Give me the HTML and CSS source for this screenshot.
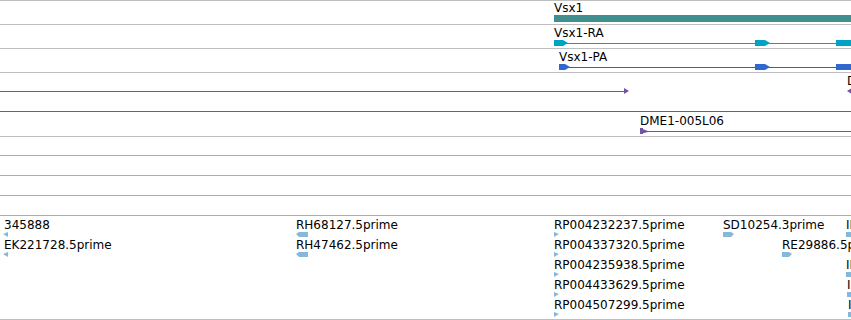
FILE: index.html
```html
<!DOCTYPE html>
<html>
<head>
    <title>Track view</title>
    <link rel="stylesheet" href="styles.css">
</head>
<body>
    <div class="tracks">
        <!-- gene -->
        <div class="track track-gene">
            <div class="feature lane-0" style="left: 554px;">
                <span class="label">Vsx1</span>
                <svg class="glyph" width="300" height="7"><rect x="0" y="0" width="300" height="7" fill="#408f8f"/></svg>
            </div>
        </div>

        <!-- transcript -->
        <div class="track track-gene">
            <div class="feature lane-1" style="left: 554px;">
                <span class="label">Vsx1-RA</span>
                <svg class="glyph" width="300" height="6">
                    <rect x="10" y="3" width="290" height="1" fill="#0e9fbf"/>
                    <polygon points="0,0 9,0 14,3 9,6 0,6" fill="#00a3c4"/>
                    <polygon points="201,0 211,0 216,3 211,6 201,6" fill="#00a3c4"/>
                    <rect x="282" y="0" width="18" height="6" fill="#00a3c4"/>
                </svg>
            </div>
        </div>

        <!-- protein -->
        <div class="track track-gene">
            <div class="feature lane-1" style="left: 559px;">
                <span class="label">Vsx1-PA</span>
                <svg class="glyph" width="300" height="6">
                    <rect x="6" y="3" width="294" height="1" fill="#2f62c4"/>
                    <polygon points="0,0 6,0 11,3 6,6 0,6" fill="#3168d0"/>
                    <polygon points="196,0 206,0 211,3 206,6 196,6" fill="#3168d0"/>
                    <rect x="277" y="0" width="23" height="6" fill="#3168d0"/>
                </svg>
            </div>
        </div>

        <!-- clones -->
        <div class="track track-clones">
            <div class="feature sub-0" style="left: 0;">
                <span class="label">&nbsp;</span>
                <svg class="glyph" width="630" height="7">
                    <rect x="0" y="3" width="626" height="1" fill="#7453a6"/>
                    <polygon points="624,0 629,3 624,6" fill="#7453a6"/>
                </svg>
            </div>
            <div class="feature sub-0" style="left: 847px;">
                <span class="label">DME1-003K21</span>
                <svg class="glyph" width="40" height="7">
                    <polygon points="0,3 5,0 5,6" fill="#7453a6"/>
                    <rect x="4" y="1" width="36" height="5" fill="#7453a6"/>
                </svg>
            </div>
            <div class="feature sub-1" style="left: 0;">
                <span class="label">&nbsp;</span>
                <svg class="glyph" width="851" height="7">
                    <rect x="0" y="3" width="851" height="1" fill="#7453a6"/>
                </svg>
            </div>
            <div class="feature sub-2" style="left: 640px;">
                <span class="label">DME1-005L06</span>
                <svg class="glyph" width="220" height="7">
                    <polygon points="0,0 8,3 8,4 0,6" fill="#7453a6"/>
                    <rect x="0" y="0" width="3" height="6" fill="#7453a6"/>
                    <rect x="6" y="3" width="214" height="1" fill="#7453a6"/>
                </svg>
            </div>
        </div>

        <div class="track track-empty"></div>
        <div class="track track-empty"></div>
        <div class="track track-empty"></div>
        <div class="track track-empty"></div>

        <!-- EST reads -->
        <div class="track track-est">
            <div class="feature row-0" style="left: 4px;">
                <span class="label">345888</span>
                <svg class="glyph left" width="6" height="5"><polygon points="0,2 5,0 5,5" fill="#86b8db"/></svg>
            </div>
            <div class="feature row-1" style="left: 4px;">
                <span class="label">EK221728.5prime</span>
                <svg class="glyph left" width="6" height="5"><polygon points="0,2 5,0 5,5" fill="#86b8db"/></svg>
            </div>

            <div class="feature row-0" style="left: 296px;">
                <span class="label">RH68127.5prime</span>
                <svg class="glyph" width="12" height="5"><polygon points="0,2 3,0 12,0 12,5 3,5" fill="#86b8db"/></svg>
            </div>
            <div class="feature row-1" style="left: 296px;">
                <span class="label">RH47462.5prime</span>
                <svg class="glyph" width="12" height="5"><polygon points="0,2 3,0 12,0 12,5 3,5" fill="#86b8db"/></svg>
            </div>

            <div class="feature row-0" style="left: 554px;">
                <span class="label">RP004232237.5prime</span>
                <svg class="glyph" width="5" height="5"><polygon points="0,0 5,2 0,5" fill="#86b8db"/></svg>
            </div>
            <div class="feature row-1" style="left: 554px;">
                <span class="label">RP004337320.5prime</span>
                <svg class="glyph" width="5" height="5"><polygon points="0,0 5,2 0,5" fill="#86b8db"/></svg>
            </div>
            <div class="feature row-2" style="left: 554px;">
                <span class="label">RP004235938.5prime</span>
                <svg class="glyph" width="5" height="5"><polygon points="0,0 5,2 0,5" fill="#86b8db"/></svg>
            </div>
            <div class="feature row-3" style="left: 554px;">
                <span class="label">RP004433629.5prime</span>
                <svg class="glyph" width="5" height="5"><polygon points="0,0 5,2 0,5" fill="#86b8db"/></svg>
            </div>
            <div class="feature row-4" style="left: 554px;">
                <span class="label">RP004507299.5prime</span>
                <svg class="glyph" width="5" height="5"><polygon points="0,0 5,2 0,5" fill="#86b8db"/></svg>
            </div>

            <div class="feature row-0" style="left: 723px;">
                <span class="label">SD10254.3prime</span>
                <svg class="glyph" width="11" height="5"><polygon points="0,0 8,0 11,2 8,5 0,5" fill="#86b8db"/></svg>
            </div>
            <div class="feature row-1" style="left: 782px;">
                <span class="label">RE29886.5prime</span>
                <svg class="glyph" width="10" height="5"><polygon points="0,0 7,0 10,2 7,5 0,5" fill="#86b8db"/></svg>
            </div>

            <div class="feature row-0" style="left: 846px;">
                <span class="label">IP004232240.5prime</span>
                <svg class="glyph" width="10" height="5"><rect x="0" y="0" width="10" height="5" fill="#86b8db"/></svg>
            </div>
            <div class="feature row-2" style="left: 846px;">
                <span class="label">IP004235941.5prime</span>
                <svg class="glyph" width="10" height="5"><rect x="0" y="0" width="10" height="5" fill="#86b8db"/></svg>
            </div>
            <div class="feature row-3" style="left: 847px;">
                <span class="label">IP004433631.5prime</span>
                <svg class="glyph" width="10" height="5"><rect x="0" y="0" width="10" height="5" fill="#86b8db"/></svg>
            </div>
            <div class="feature row-4" style="left: 848px;">
                <span class="label">I</span>
                <svg class="glyph" width="10" height="5"><rect x="0" y="0" width="10" height="5" fill="#86b8db"/></svg>
            </div>
        </div>
    </div>
</body>
</html>
```

FILE: styles.css
```css
body {
    margin: 0;
    background: white;
    font-family: 'DejaVu Sans', sans-serif;
    font-size: 12px;
    color: #000;
}

.tracks {
    width: 851px;
    height: 320px;
    overflow: hidden;
    border-top: 1px solid #bfbfbf;
}

.track {
    position: relative;
    overflow: hidden;
    border-bottom: 1px solid #bfbfbf;
}

.track-gene {
    height: 23px;
}

.track-clones {
    height: 63px;
}

.track-empty {
    height: 18px;
    border-bottom-color: #8ab6d6;
}

.track-empty + .track-empty {
    height: 19px;
}

.track-est {
    height: 103px;
}

.feature {
    position: absolute;
    display: flex;
    flex-direction: column;
    align-items: flex-start;
}

.label {
    font-size: 12px;
    line-height: 14px;
    white-space: nowrap;
}

.glyph {
    display: block;
}

.lane-0 {
    top: 0;
}

.lane-1 .label {
    margin-top: 1px;
}

.sub-0 { top: 1px; }
.sub-1 { top: 21px; }
.sub-2 { top: 41px; }

.row-0 { top: 2px; }
.row-1 { top: 22px; }
.row-2 { top: 42px; }
.row-3 { top: 62px; }
.row-4 { top: 82px; }

.glyph.left {
    margin-left: -1px;
}
```
